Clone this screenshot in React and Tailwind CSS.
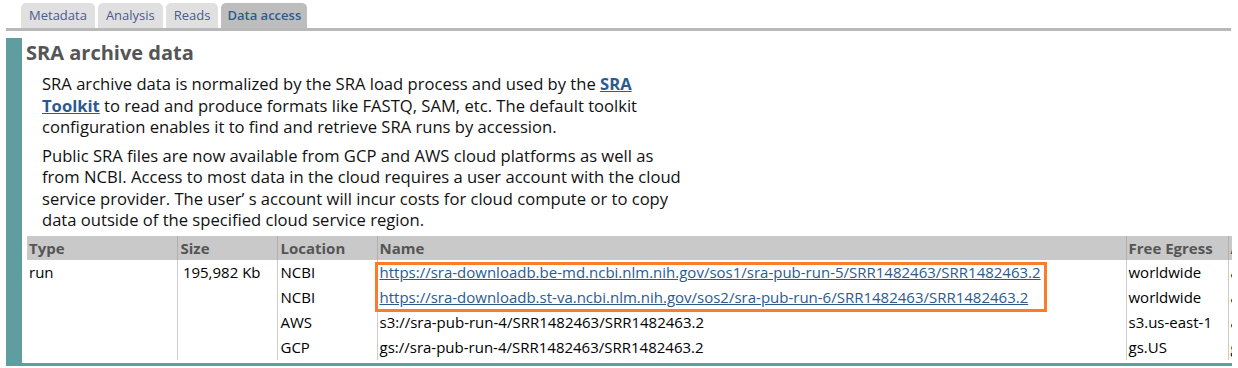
import React from 'react';

const tabs = ['Metadata', 'Analysis', 'Reads', 'Data access'];

const rows = [
  { type: 'run', size: '195,982 Kb', loc: 'NCBI', name: 'https://sra-downloadb.be-md.ncbi.nlm.nih.gov/sos1/sra-pub-run-5/SRR1482463/SRR1482463.2', link: true, egress: 'worldwide', extra: 'anonymous' },
  { type: '', size: '', loc: 'NCBI', name: 'https://sra-downloadb.st-va.ncbi.nlm.nih.gov/sos2/sra-pub-run-6/SRR1482463/SRR1482463.2', link: true, egress: 'worldwide', extra: 'anonymous' },
  { type: '', size: '', loc: 'AWS', name: 's3://sra-pub-run-4/SRR1482463/SRR1482463.2', egress: 's3.us-east-1', extra: 'anonymous' },
  { type: '', size: '', loc: 'GCP', name: 'gs://sra-pub-run-4/SRR1482463/SRR1482463.2', egress: 'gs.US', extra: 'gcp identity' },
];

export default function App() {
  return (
    <div className="w-[1238px] h-[368px] bg-white overflow-hidden font-['Open_Sans',sans-serif]">
      {/* tabs */}
      <div className="flex gap-[3px] pl-[21px] pt-[3px]">
        {tabs.map((t) => (
          <div
            key={t}
            className={
              t === 'Data access'
                ? 'h-[25px] px-[6px] rounded-t-[5px] bg-[#bdbdbd] text-[#2f5a8c] text-[13px] font-semibold leading-[25px]'
                : 'h-[25px] px-[8px] rounded-t-[5px] bg-[#e0e0e0] text-[#4a5b8c] text-[13px] leading-[25px]'
            }
          >
            {t}
          </div>
        ))}
      </div>
      <div className="ml-[6px] w-[1225px] h-[3px] bg-[#b9b9b9]"></div>

      {/* panel */}
      <div className="ml-[6px] mt-[7px] w-[1226px] h-[328px] border-l-[16px] border-b-[3px] border-[#5f9ea0] overflow-hidden">
        <h2 className="pl-[4px] pt-[2px] text-[20px] font-bold text-[#555555] leading-[26px]">SRA archive data</h2>
        <div className="pl-[20px] pt-[7px] text-[16.6px] leading-[21.5px] text-[#111] whitespace-nowrap">
          <p>
            SRA archive data is normalized by the SRA load process and used by the{' '}
            <a href="#" className="font-bold text-[#2b5a90] underline">SRA<br />Toolkit</a> to read and produce formats like FASTQ, SAM, etc. The default toolkit<br />
            configuration enables it to find and retrieve SRA runs by accession.
          </p>
          <p className="mt-[7px]">
            Public SRA files are now available from GCP and AWS cloud platforms as well as<br />
            from NCBI. Access to most data in the cloud requires a user account with the cloud<br />
            service provider. The user’ s account will incur costs for cloud compute or to copy<br />
            data outside of the specified cloud service region.
          </p>
        </div>

        <div className="relative ml-[5px] mt-[5px]">
          <table className="w-[1300px] text-[15px] border-collapse whitespace-nowrap">
            <thead>
              <tr className="bg-[#c9c9c9] text-[#555] font-bold h-[24px] leading-[20px]">
                <td className="w-[150px] pl-[2px]">Type</td>
                <td className="w-[100px] pl-[3px] border-l border-[#b0b0b0]">Size</td>
                <td className="w-[100px] pl-[3px] border-l border-[#b0b0b0]">Location</td>
                <td className="w-[749px] pl-[2px] border-l border-[#b0b0b0]">Name</td>
                <td className="w-[102px] pl-[2px] border-l border-[#b0b0b0]">Free Egress</td>
                <td className="pl-[2px] border-l border-[#b0b0b0]">Access Type</td>
              </tr>
            </thead>
            <tbody>
              {rows.map((r, i) => (
                <tr key={i} className="h-[25px] text-black leading-[20px]">
                  <td className="pl-[2px]">{r.type}</td>
                  <td className="pr-[16px] text-right border-l border-[#ccc]">{r.size}</td>
                  <td className="pl-[3px] border-l border-[#ccc]">{r.loc}</td>
                  <td className="pl-[2px] border-l border-[#ccc]">
                    {r.link ? (
                      <a href="#" className="text-[#2b5a90] underline">{r.name}</a>
                    ) : (
                      r.name
                    )}
                  </td>
                  <td className="pl-[2px] border-l border-[#ccc]">{r.egress}</td>
                  <td className="pl-[2px] border-l border-[#ccc]">{r.extra}</td>
                </tr>
              ))}
            </tbody>
          </table>
          {/* highlight box */}
          <div className="absolute left-[348px] top-[26px] w-[672px] h-[50px] border-[3px] border-[#fb7d2a] pointer-events-none"></div>
        </div>
      </div>
    </div>
  );
}
